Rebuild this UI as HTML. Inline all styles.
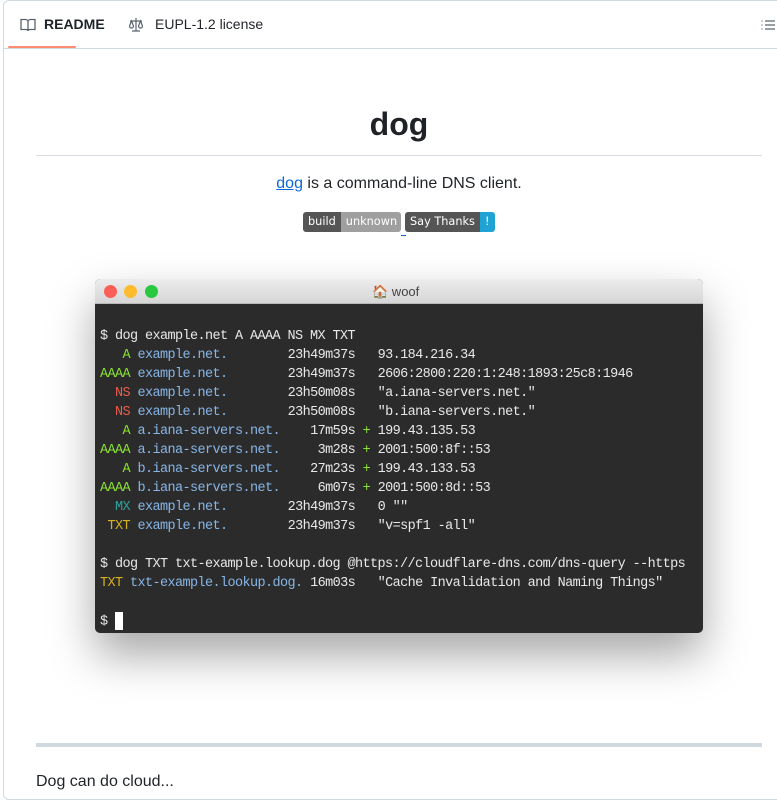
<!DOCTYPE html>
<html><head><style>
*{margin:0;padding:0;box-sizing:border-box}
body{width:777px;height:777px;overflow:hidden;background:#fff;font-family:"Liberation Sans",sans-serif;color:#1f2328;position:relative}
.box{position:absolute;left:3px;top:0;width:790px;height:800px;border:1px solid #d1d9e0;border-radius:6px}
.tabs{position:absolute;left:3px;top:0;width:790px;height:49px;border-bottom:1px solid #d1d9e0}
.tab{position:absolute;top:16px;font-size:14px;line-height:17px}
.ul{position:absolute;left:8px;top:46px;width:68px;height:2px;background:#fd8c73;border-radius:2px}
h1{position:absolute;left:36px;width:726px;top:104px;text-align:center;font-size:32px;line-height:40px;font-weight:bold}
.hr1{position:absolute;left:36px;width:726px;top:155px;height:1px;background:#d8dee4}
.p{position:absolute;left:36px;width:726px;top:174px;text-align:center;font-size:16px;line-height:20px}
.p a{color:#0969da;text-decoration:underline}
.badge{position:absolute;top:212px;height:20px;line-height:20px;color:#fff;border-radius:3px;overflow:hidden;display:flex}
.badge span{padding:0 5px;font-family:"DejaVu Sans",sans-serif;font-size:11.3px}
.term{position:absolute;left:95px;top:279px;width:608px;height:354px;background:#2b2b2b;border-radius:5px;box-shadow:0 22px 45px rgba(0,0,0,.35);overflow:hidden}
.tb{height:25px;background:linear-gradient(#ececec,#d6d6d6);border-bottom:1px solid #b8b8b8;position:relative}
.dot{position:absolute;top:6px;width:13px;height:13px;border-radius:50%}
pre{position:absolute;left:5px;top:48px;font-family:"Liberation Mono",monospace;font-size:13.5px;line-height:19px;color:#e8e8e8;letter-spacing:-0.6px}
.g{color:#8ae234}.r{color:#ef5b4c}.b{color:#87b5e6}.t{color:#2aa5a0}.y{color:#d6b21c}
.hr2{position:absolute;left:36px;width:726px;top:743px;height:4px;background:#d1d9e0}
</style></head><body>
<div class="box"></div>
<div class="tabs"></div>
<svg style="position:absolute;left:20px;top:17px" width="16" height="16" viewBox="0 0 16 16" fill="none" stroke="#59636e" stroke-width="1.3"><path d="M1 2.5h4.5c1.3 0 2.5 1 2.5 2.3V14c0-.9-.9-1.5-2-1.5H1zM15 2.5h-4.5C9.2 2.5 8 3.5 8 4.8V14c0-.9.9-1.5 2-1.5h5z"/></svg>
<div class="tab" style="left:44px;font-weight:bold">README</div>
<svg style="position:absolute;left:128px;top:17px" width="16" height="16" viewBox="0 0 16 16" fill="none" stroke="#59636e" stroke-width="1.2"><path d="M8 1v13M4 14h8M2 4h12M3.5 4L1.5 9a2 2 0 0 0 4 0zM12.5 4l-2 5a2 2 0 0 0 4 0z"/></svg>
<div class="tab" style="left:155px">EUPL-1.2 license</div>
<svg style="position:absolute;left:760px;top:17px" width="16" height="16" viewBox="0 0 16 16" stroke="#59636e" stroke-width="1.3"><path d="M5 4h10M5 8h10M5 12h10M1.5 4h1M1.5 8h1M1.5 12h1"/></svg>
<div class="ul"></div>
<h1>dog</h1>
<div class="hr1"></div>
<div class="p"><a>dog</a> is a command-line DNS client.</div>
<div class="badge" style="left:303px;width:98px"><span style="background:#555">build</span><span style="background:#9f9f9f;flex:1">unknown</span></div>
<div class="badge" style="left:405px;width:90px"><span style="background:#555">Say Thanks</span><span style="background:#1fa2d4;flex:1">!</span></div>
<div style="position:absolute;left:401px;top:235px;width:5px;height:1px;background:#0969da"></div>
<div class="term">
<div class="tb">
<div class="dot" style="left:9px;background:#fc5f57"></div>
<div class="dot" style="left:29px;background:#fdbc2e"></div>
<div class="dot" style="left:50px;background:#28c840"></div>
<div style="position:absolute;left:277px;top:5px;font-size:13px;color:#444"><span style="color:#d07020">🏠</span> woof</div>
</div>
<pre>$ dog example.net A AAAA NS MX TXT
<span class="g">   A</span> <span class="b">example.net.</span>        23h49m37s   93.184.216.34
<span class="g">AAAA</span> <span class="b">example.net.</span>        23h49m37s   2606:2800:220:1:248:1893:25c8:1946
<span class="r">  NS</span> <span class="b">example.net.</span>        23h50m08s   "a.iana-servers.net."
<span class="r">  NS</span> <span class="b">example.net.</span>        23h50m08s   "b.iana-servers.net."
<span class="g">   A</span> <span class="b">a.iana-servers.net.</span>    17m59s <span class="g">+</span> 199.43.135.53
<span class="g">AAAA</span> <span class="b">a.iana-servers.net.</span>     3m28s <span class="g">+</span> 2001:500:8f::53
<span class="g">   A</span> <span class="b">b.iana-servers.net.</span>    27m23s <span class="g">+</span> 199.43.133.53
<span class="g">AAAA</span> <span class="b">b.iana-servers.net.</span>     6m07s <span class="g">+</span> 2001:500:8d::53
<span class="t">  MX</span> <span class="b">example.net.</span>        23h49m37s   0 ""
<span class="y"> TXT</span> <span class="b">example.net.</span>        23h49m37s   "v=spf1 -all"

$ dog TXT txt-example.lookup.dog @https://cloudflare-dns.com/dns-query --https
<span class="y">TXT</span> <span class="b">txt-example.lookup.dog.</span> 16m03s   "Cache Invalidation and Naming Things"

$ <span style="background:#fff;display:inline-block;width:8px;height:18px;vertical-align:middle"></span></pre>
</div>
<div class="hr2"></div>
<div style="position:absolute;left:36px;top:773px;font-size:16px">Dog can do cloud...</div>
</body></html>
